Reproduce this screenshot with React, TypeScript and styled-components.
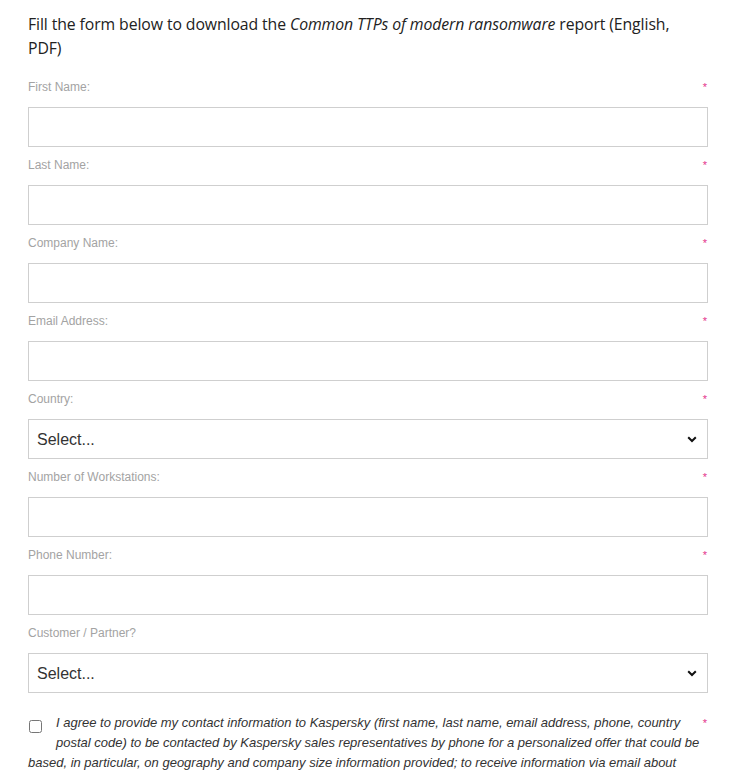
import styled, { createGlobalStyle } from "styled-components";

const fields: { label: string; kind: "input" | "select"; required: boolean }[] = [
  { label: "First Name:", kind: "input", required: true },
  { label: "Last Name:", kind: "input", required: true },
  { label: "Company Name:", kind: "input", required: true },
  { label: "Email Address:", kind: "input", required: true },
  { label: "Country:", kind: "select", required: true },
  { label: "Number of Workstations:", kind: "input", required: true },
  { label: "Phone Number:", kind: "input", required: true },
  { label: "Customer / Partner?", kind: "select", required: false },
];

export default function App() {
  return (
    <>
      <GlobalStyle />
      <Page>
        <Intro>
          Fill the form below to download the <em>Common TTPs of modern ransomware</em> report
          (English, PDF)
        </Intro>
        <Form>
          {fields.map((f) => (
            <Field key={f.label}>
              <LabelRow>
                <Label>{f.label}</Label>
                {f.required ? <Star>*</Star> : null}
              </LabelRow>
              {f.kind === "input" ? (
                <TextInput type="text" />
              ) : (
                <SelectWrap>
                  <Select defaultValue="">
                    <option value="">Select...</option>
                  </Select>
                  <Chevron width="10" height="7" viewBox="0 0 10 7">
                    <path d="M1.2 1.2 L5 5 L8.8 1.2" fill="none" stroke="#111" strokeWidth="2" />
                  </Chevron>
                </SelectWrap>
              )}
            </Field>
          ))}
          <Consent>
            <CheckWrap>
              <input type="checkbox" />
            </CheckWrap>
            <ConsentStar>*</ConsentStar>
            I agree to provide my contact information to Kaspersky (first name, last name, email
            address, phone, country postal code) to be contacted by Kaspersky sales representatives
            by phone for a personalized offer that could be based, in particular, on geography and
            company size information provided; to receive information via email about
          </Consent>
        </Form>
      </Page>
    </>
  );
}

const GlobalStyle = createGlobalStyle`
  body {
    margin: 0;
    background: #fff;
  }
`;

const Page = styled.div`
  padding: 12px 28px 0;
`;

const Intro = styled.p`
  margin: 0 0 19px;
  max-width: 660px;
  font-family: "Open Sans", sans-serif;
  font-size: 15.8px;
  line-height: 24px;
  color: #222;
  letter-spacing: -0.1px;
`;

const Form = styled.form`
  display: flex;
  flex-direction: column;
`;

const Field = styled.div`
  display: flex;
  flex-direction: column;
  margin-bottom: 10px;
`;

const LabelRow = styled.div`
  display: flex;
  justify-content: space-between;
  align-items: center;
  height: 16px;
  margin-bottom: 12px;
`;

const Label = styled.label`
  font-family: "Liberation Sans", Arial, sans-serif;
  font-size: 12px;
  color: #a3a3a3;
`;

const Star = styled.span`
  font-family: "Liberation Sans", Arial, sans-serif;
  font-size: 11px;
  color: #e4348b;
  margin-right: 1px;
`;

const TextInput = styled.input`
  box-sizing: border-box;
  height: 40px;
  width: 100%;
  margin: 0;
  border: 1px solid #cfcfcf;
  background: #fff;
  outline: none;
`;

const SelectWrap = styled.div`
  position: relative;
`;

const Select = styled.select`
  box-sizing: border-box;
  display: block;
  appearance: none;
  height: 40px;
  width: 100%;
  margin: 0;
  padding: 0 30px 0 8px;
  border: 1px solid #cfcfcf;
  border-radius: 0;
  background: #fff;
  font-family: "Liberation Sans", Arial, sans-serif;
  font-size: 16px;
  color: #333;
  outline: none;
`;

const Chevron = styled.svg`
  position: absolute;
  right: 11px;
  top: 17px;
  pointer-events: none;
`;

const Consent = styled.div`
  margin-top: 10px;
  font-family: "Liberation Sans", Arial, sans-serif;
  font-style: italic;
  font-size: 13px;
  line-height: 20px;
  color: #333;
`;

const CheckWrap = styled.span`
  float: left;
  width: 28px;
  height: 38px;
  input {
    margin: 7px 0 0 1px;
  }
`;

const ConsentStar = styled.span`
  float: right;
  font-style: normal;
  font-size: 11px;
  color: #e4348b;
  margin-right: 1px;
  margin-left: 20px;
`;
